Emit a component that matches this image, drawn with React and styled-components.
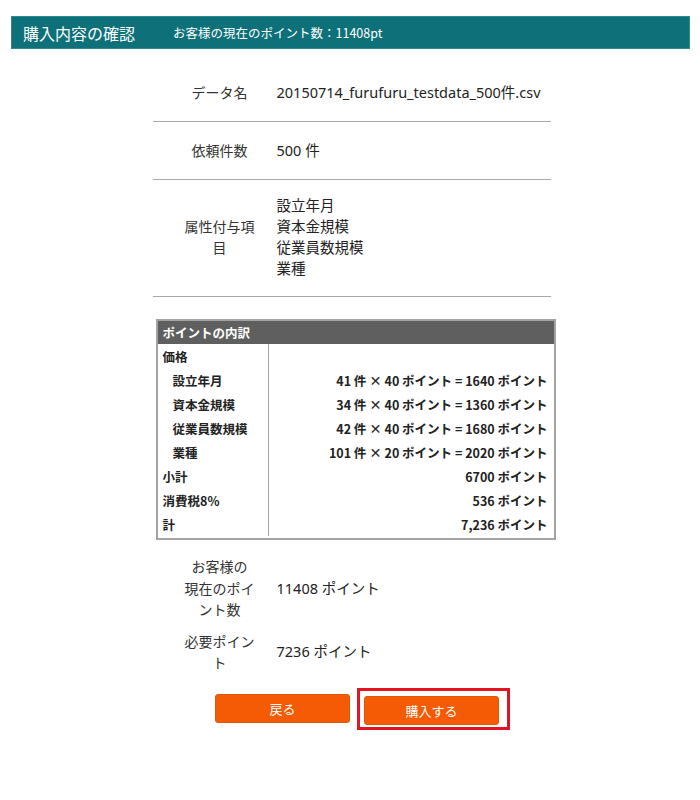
import React from 'react';
import styled, { createGlobalStyle } from 'styled-components';

const GlobalStyle = createGlobalStyle`
  body {
    margin: 0;
    background: #fff;
    font-family: "Noto Sans", "Noto Sans CJK JP", sans-serif;
    color: #222;
  }
`;

const Page = styled.div`
  width: 700px;
  padding: 16px 10px 0 11px;
  box-sizing: border-box;
`;

const Header = styled.div`
  display: flex;
  align-items: center;
  height: 33px;
  padding-left: 11px;
  background-color: #0e7179;
  border: 1px solid #2d8a90;
  box-sizing: border-box;
  color: #fff;
`;

const HeaderTitle = styled.div`
  font-size: 16px;
  font-family: "Noto Sans CJK JP", sans-serif;
  width: 150px;
`;

const HeaderSub = styled.div`
  font-size: 12.5px;
  font-family: "Noto Sans CJK JP", sans-serif;
`;

const Column = styled.div`
  width: 398px;
  margin: 15px auto 0;
  padding-left: 2px;
`;

const InfoRow = styled.div`
  display: flex;
  align-items: center;
  padding: ${(p) => (p.multi ? '15px 0 17px' : '18px 0')};
  border-bottom: 1px solid #a8a8a8;
  font-size: 14px;
  line-height: 21px;
`;

const Label = styled.div`
  width: 76px;
  margin: 0 19px 0 29px;
  text-align: center;
  font-family: "Noto Sans CJK JP", sans-serif;
  color: #333;
`;

const Value = styled.div`
  font-size: 14.5px;
  color: #222;
`;

const Table = styled.div`
  margin: 22px 0 0 3px;
  width: 400px;
  border: 2px solid #a3a3a3;
  box-sizing: border-box;
  font-size: 12.5px;
  font-weight: bold;
  font-family: "Noto Sans CJK JP", sans-serif;
`;

const TableHead = styled.div`
  height: 23px;
  display: flex;
  align-items: center;
  padding-left: 5px;
  background: #5f5f5f;
  color: #fff;
`;

const TableBody = styled.div`
  display: grid;
  grid-template-columns: 111px 1fr;
  padding-bottom: 2px;
`;

const Cell = styled.div`
  height: 24px;
  display: flex;
  align-items: center;
  padding-left: ${(p) => (p.sub ? '15px' : '5px')};
  border-right: 1px solid #a3a3a3;
  color: #222;
`;

const Amount = styled.div`
  height: 24px;
  display: flex;
  align-items: center;
  justify-content: flex-end;
  padding-right: 6px;
  color: #222;
`;

const Lower = styled.div`
  margin-top: 8px;
`;

const LowerRow = styled(InfoRow)`
  padding: ${(p) => (p.first ? '8px 0 0' : '10px 0 0')};
  border: none;
  line-height: 21.5px;
`;

const ButtonRow = styled.div`
  display: flex;
  align-items: center;
  justify-content: center;
  gap: 7px;
  margin-top: 14px;
  padding-left: 24px;
`;

const Button = styled.button`
  width: 135px;
  height: 29px;
  border: 1px solid #e0560a;
  border-radius: 3px;
  background: #f55b04;
  color: #fff;
  font-size: 13px;
  font-family: "Noto Sans CJK JP", sans-serif;
  cursor: pointer;
`;

const Highlight = styled.div`
  border: 3px solid #e3141f;
  padding: 5px 8px 2px 4px;
`;

const items = [
  { name: '設立年月', text: '41 件 × 40 ポイント = 1640 ポイント' },
  { name: '資本金規模', text: '34 件 × 40 ポイント = 1360 ポイント' },
  { name: '従業員数規模', text: '42 件 × 40 ポイント = 1680 ポイント' },
  { name: '業種', text: '101 件 × 20 ポイント = 2020 ポイント' },
];

const totals = [
  { name: '小計', text: '6700 ポイント' },
  { name: '消費税8%', text: '536 ポイント' },
  { name: '計', text: '7,236 ポイント' },
];

const App = () => (
  <Page>
    <GlobalStyle />
    <Header>
      <HeaderTitle>購入内容の確認</HeaderTitle>
      <HeaderSub>お客様の現在のポイント数：11408pt</HeaderSub>
    </Header>
    <Column>
      <InfoRow>
        <Label>データ名</Label>
        <Value>20150714_furufuru_testdata_500件.csv</Value>
      </InfoRow>
      <InfoRow>
        <Label>依頼件数</Label>
        <Value>500 件</Value>
      </InfoRow>
      <InfoRow multi>
        <Label>属性付与項目</Label>
        <Value>
          設立年月<br />資本金規模<br />従業員数規模<br />業種
        </Value>
      </InfoRow>
      <Table>
        <TableHead>ポイントの内訳</TableHead>
        <TableBody>
          <Cell>価格</Cell>
          <Amount />
          {items.map((it) => (
            <React.Fragment key={it.name}>
              <Cell sub>{it.name}</Cell>
              <Amount>{it.text}</Amount>
            </React.Fragment>
          ))}
          {totals.map((it) => (
            <React.Fragment key={it.name}>
              <Cell>{it.name}</Cell>
              <Amount>{it.text}</Amount>
            </React.Fragment>
          ))}
        </TableBody>
      </Table>
      <Lower>
        <LowerRow first>
          <Label>お客様の<br />現在のポイント数</Label>
          <Value>11408 ポイント</Value>
        </LowerRow>
        <LowerRow>
          <Label>必要ポイント</Label>
          <Value>7236 ポイント</Value>
        </LowerRow>
      </Lower>
    </Column>
    <ButtonRow>
      <Button>戻る</Button>
      <Highlight>
        <Button>購入する</Button>
      </Highlight>
    </ButtonRow>
  </Page>
);

export default App;
